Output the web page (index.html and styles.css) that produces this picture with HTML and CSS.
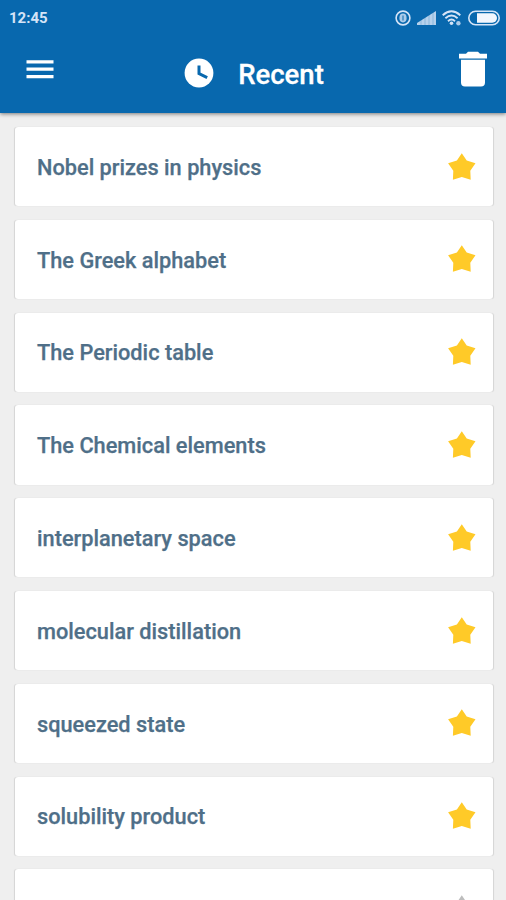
FILE: index.html
```html
<!DOCTYPE html>
<html lang="en">
<head>
    <meta charset="UTF-8" />
    <meta name="viewport" content="width=device-width, initial-scale=1.0" />
    <title>Recent</title>
    <link rel="stylesheet" href="styles.css">
</head>
<body>

    <!-- shared star icon -->
    <svg class="sprite" aria-hidden="true">
        <symbol id="star" viewBox="0 0 28 28">
            <path d="M13.8.3 18.7 7.5 27.5 10.2 22.3 17.7 22.7 26.8 13.8 23.9 4.9 26.8 5.3 17.7.1 10.2 8.9 7.5Z" />
        </symbol>
    </svg>

    <header class="header">
        <div class="status-bar">
            <span class="time">12:45</span>
            <div class="status-icons">
                <svg width="16" height="16" viewBox="0 0 16 16">
                    <circle cx="8" cy="8" r="6.9" fill="none" stroke="currentColor" stroke-width="1.6" />
                    <ellipse cx="8" cy="8" rx="3.6" ry="4.4" fill="currentColor" opacity=".8" />
                    <path d="M8 5.5v5" stroke="#0868ae" stroke-width="1.4" opacity=".7" />
                </svg>
                <svg class="signal" width="20" height="14" viewBox="0 0 20 14">
                    <path d="M0 14v-2L19 0v14Z" fill="currentColor" opacity=".85" />
                    <path d="M4 7v7M8 5v9M12 3v11M16 0v14" stroke="#0868ae" stroke-width=".6" opacity=".4" />
                </svg>
                <svg class="wifi" width="20" height="16" viewBox="0 0 20 16">
                    <g fill="none" stroke="currentColor" stroke-width="1.9">
                        <path d="M.7 5.2Q9.5-2.6 18.3 5.2" />
                        <path d="M3.4 8.2Q9.5 2.8 15.6 8.2" />
                        <path d="M6 11.2Q9.5 8 13 11.2" />
                    </g>
                    <circle cx="9.5" cy="13.2" r="1.8" fill="currentColor" />
                    <circle cx="16.4" cy="13.2" r="2.2" fill="currentColor" opacity=".8" />
                </svg>
                <svg class="battery" width="32" height="16" viewBox="0 0 32 16">
                    <rect x=".8" y="1.2" width="30.4" height="13.6" rx="6.8" fill="none" stroke="currentColor" stroke-width="1.6" />
                    <path d="M9 3.3h15.3a4.7 4.7 0 0 1 0 9.4H9Z" fill="#f2f6fd" />
                </svg>
            </div>
        </div>

        <div class="toolbar">
            <button class="icon-btn menu-btn" aria-label="Menu">
                <svg width="28" height="20" viewBox="0 0 28 20">
                    <path d="M.5 2.8h27M.5 10.2h27M.5 17.6h27" stroke="currentColor" stroke-width="3.2" />
                </svg>
            </button>
            <div class="title">
                <svg width="30" height="30" viewBox="0 0 30 30">
                    <circle cx="15" cy="15" r="14.4" fill="currentColor" />
                    <path d="M15 7.5v8.1l8.2 4" fill="none" stroke="#0868ae" stroke-width="3" />
                </svg>
                <h1>Recent</h1>
            </div>
            <button class="icon-btn delete-btn" aria-label="Clear recent">
                <svg width="28" height="36" viewBox="0 0 28 36">
                    <path d="M0 2.7h7L9 .7h10l2 2h7v4.8H0ZM2 8.8h24v22.7a4 4 0 0 1-4 4H6a4 4 0 0 1-4-4Z" fill="currentColor" />
                </svg>
            </button>
        </div>
    </header>

    <main class="list">
        <div class="card">
            <span>Nobel prizes in physics</span>
            <svg class="star"><use href="#star" /></svg>
        </div>
        <div class="card">
            <span>The Greek alphabet</span>
            <svg class="star"><use href="#star" /></svg>
        </div>
        <div class="card">
            <span>The Periodic table</span>
            <svg class="star"><use href="#star" /></svg>
        </div>
        <div class="card">
            <span>The Chemical elements</span>
            <svg class="star"><use href="#star" /></svg>
        </div>
        <div class="card">
            <span>interplanetary space</span>
            <svg class="star"><use href="#star" /></svg>
        </div>
        <div class="card">
            <span>molecular distillation</span>
            <svg class="star"><use href="#star" /></svg>
        </div>
        <div class="card">
            <span>squeezed state</span>
            <svg class="star"><use href="#star" /></svg>
        </div>
        <div class="card">
            <span>solubility product</span>
            <svg class="star"><use href="#star" /></svg>
        </div>
        <div class="card">
            <span></span>
            <svg class="star off"><use href="#star" /></svg>
        </div>
    </main>

</body>
</html>
```

FILE: styles.css
```css
* {
    box-sizing: border-box;
}

body {
    margin: 0;
    height: 100vh;
    overflow: hidden;
    display: flex;
    flex-direction: column;
    background: #efefef;
    font-family: Roboto, sans-serif;
}

svg {
    display: block;
    flex-shrink: 0;
}

.sprite {
    display: none;
}

.header {
    position: relative;
    z-index: 1;
    flex-shrink: 0;
    height: 113px;
    background: #0868ae;
    color: #fff;
    box-shadow: 0 1px 4px rgba(0, 0, 0, 0.5);
}

.status-bar {
    height: 35px;
    padding: 0 6px 0 9px;
    display: flex;
    align-items: center;
    justify-content: space-between;
    color: #d5e4f7;
}

.time {
    font-size: 15px;
    font-weight: 700;
}

.status-icons {
    display: flex;
    align-items: center;
    gap: 6px;
}

.signal {
    margin: 0 -1px 0 0;
}

.toolbar {
    height: 78px;
    padding: 0 19px 0 26px;
    display: flex;
    align-items: flex-start;
    justify-content: space-between;
}

.icon-btn {
    padding: 0;
    border: none;
    background: none;
    color: #fff;
    cursor: pointer;
}

.menu-btn {
    margin-top: 24px;
}

.delete-btn {
    margin-top: 16px;
}

.title {
    display: flex;
    align-items: center;
    gap: 24px;
    margin-top: 21px;
    margin-right: 5px;
}

.title h1 {
    margin: 4px 0 0;
    font-size: 27.5px;
    line-height: 30px;
    font-weight: 500;
    -webkit-text-stroke: 0.3px currentColor;
}

.list {
    flex: 1;
    min-height: 0;
    overflow: hidden;
    display: flex;
    flex-direction: column;
    gap: 13.5px;
    padding: 14px 13px 0 14.5px;
}

.card {
    flex-shrink: 0;
    height: 79.3px;
    padding: 0 17px 0 22.5px;
    display: flex;
    align-items: center;
    justify-content: space-between;
    background: #fff;
    border-radius: 3px;
    box-shadow: -1px 0 1px -0.5px rgba(0, 0, 0, 0.11), 1px 0 1px -0.5px rgba(0, 0, 0, 0.11);
    color: #4f6f88;
    font-size: 21.75px;
    font-weight: 500;
}

.card span {
    padding-top: 1.5px;
    -webkit-text-stroke: 0.25px currentColor;
}

.star {
    width: 28px;
    height: 28px;
    fill: #ffca28;
}

.star.off {
    fill: #bdbdbd;
}
```
